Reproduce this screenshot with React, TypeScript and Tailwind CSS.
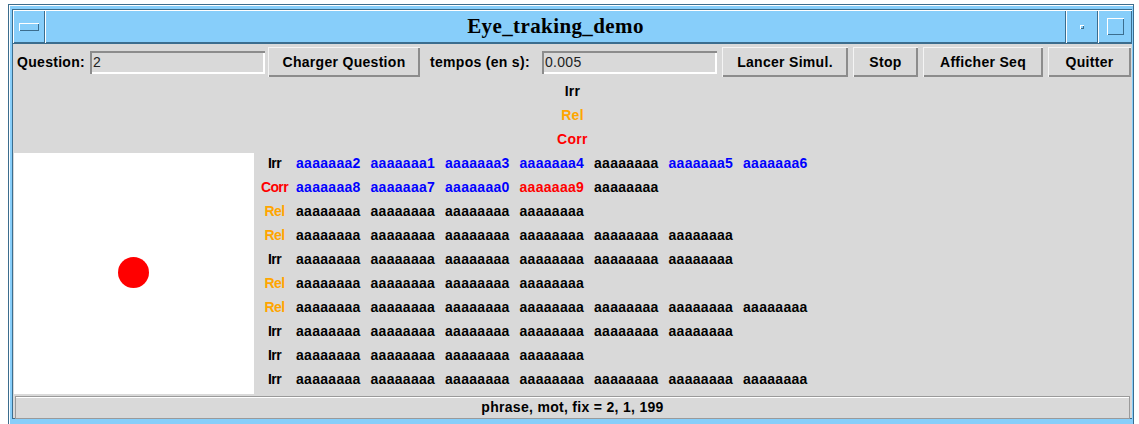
import React from "react";

type Word = { t: string; c?: "b" | "r" | "k" };
type Row = { label: "Irr" | "Rel" | "Corr"; words: Word[] };

const A = "aaaaaaaa";
const plain = (n: number): Word[] => Array.from({ length: n }, () => ({ t: A }));

const rows: Row[] = [
  {
    label: "Irr",
    words: [
      { t: "aaaaaaa2", c: "b" },
      { t: "aaaaaaa1", c: "b" },
      { t: "aaaaaaa3", c: "b" },
      { t: "aaaaaaa4", c: "b" },
      { t: A },
      { t: "aaaaaaa5", c: "b" },
      { t: "aaaaaaa6", c: "b" },
    ],
  },
  {
    label: "Corr",
    words: [
      { t: "aaaaaaa8", c: "b" },
      { t: "aaaaaaa7", c: "b" },
      { t: "aaaaaaa0", c: "b" },
      { t: "aaaaaaa9", c: "r" },
      { t: A },
    ],
  },
  { label: "Rel", words: plain(4) },
  { label: "Rel", words: plain(6) },
  { label: "Irr", words: plain(6) },
  { label: "Rel", words: plain(4) },
  { label: "Rel", words: plain(7) },
  { label: "Irr", words: plain(6) },
  { label: "Irr", words: plain(4) },
  { label: "Irr", words: plain(7) },
];

function labelColor(l: Row["label"]) {
  if (l === "Rel") return "text-[#ffa500]";
  if (l === "Corr") return "text-[#ff0000]";
  return "text-black";
}

function wordColor(c?: Word["c"]) {
  if (c === "b") return "text-[#0000ff]";
  if (c === "r") return "text-[#ff0000]";
  return "text-black";
}

function Button({ w, children }: { w: string; children: React.ReactNode }) {
  return (
    <div
      className={`${w} h-[30px] flex items-center justify-center bg-[#d9d9d9] shadow-[inset_1px_1px_0_#f4f4f4,inset_-2px_-2px_0_#8c8c8c] font-bold`}
    >
      {children}
    </div>
  );
}

function Field({ value }: { value: string }) {
  return (
    <div className="w-[175px] h-[23px] flex items-center pl-[3px] bg-[#d9d9d9] shadow-[inset_2px_2px_0_#8c8c8c,inset_-2px_-2px_0_#ffffff] font-normal text-[#222]">
      {value}
    </div>
  );
}

export default function App() {
  return (
    <div
      className="w-[1139px] h-[424px] bg-white overflow-hidden text-[14px] tracking-[0.3px] text-black"
      style={{ fontFamily: '"Liberation Sans", Arial, sans-serif' }}
    >
      {/* window frame */}
      <div className="ml-[8px] mt-[4px] w-[1126px] h-[430px] bg-[#87cefa] border border-[#3b6d8e] pl-[3px] pt-[4px] pr-[1px] shadow-[inset_1px_1px_0_#ffffff]">
        <div className="border-l border-t border-[#3b6d8e]">
          {/* title bar */}
          <div className="h-[34px] flex border-b border-[#3b6d8e] bg-[#87cefa]">
            <div className="w-[32px] h-[33px] flex items-center justify-center shadow-[inset_1px_1px_0_#ffffff,inset_-1px_-1px_0_#3b6d8e]">
              <div className="w-[20px] h-[8px] bg-[#87cefa] shadow-[inset_1px_1px_0_#ffffff,inset_-1px_-1px_0_#3b6d8e]" />
            </div>
            <div
              className="flex-1 h-[33px] flex items-center justify-center font-bold text-[21px] tracking-[0.4px] shadow-[inset_1px_1px_0_#ffffff,inset_-1px_-1px_0_#3b6d8e]"
              style={{ fontFamily: '"Liberation Serif", "Times New Roman", serif' }}
            >
              Eye_traking_demo
            </div>
            <div className="w-[32px] h-[33px] flex items-center justify-center shadow-[inset_1px_1px_0_#ffffff,inset_-1px_-1px_0_#3b6d8e]">
              <div className="w-[4px] h-[4px] bg-[#87cefa] shadow-[inset_1px_1px_0_#ffffff,inset_-1px_-1px_0_#3b6d8e]" />
            </div>
            <div className="w-[34px] h-[33px] flex items-center justify-center shadow-[inset_1px_1px_0_#ffffff,inset_-1px_-1px_0_#3b6d8e]">
              <div className="w-[17px] h-[17px] bg-[#87cefa] shadow-[inset_1px_1px_0_#ffffff,inset_-1px_-1px_0_#3b6d8e]" />
            </div>
          </div>

          {/* client area */}
          <div className="h-[375px] bg-[#d9d9d9] border-b border-[#3b6d8e] flex flex-col">
            {/* toolbar */}
            <div className="mt-[3px] h-[30px] flex items-center">
              <div className="w-[77px] pl-[4px] font-bold">Question:</div>
              <Field value="2" />
              <div className="ml-[3px]">
                <Button w="w-[152px]">Charger Question</Button>
              </div>
              <div className="w-[122px] pl-[10px] font-bold">tempos (en s):</div>
              <Field value="0.005" />
              <div className="ml-[5px] flex gap-[5px]">
                <Button w="w-[126px]">Lancer Simul.</Button>
                <Button w="w-[65px]">Stop</Button>
                <Button w="w-[120px]">Afficher Seq</Button>
                <Button w="w-[83px]">Quitter</Button>
              </div>
            </div>

            {/* legend */}
            <div className="mt-[2px] flex flex-col items-center font-bold">
              <div className="h-[24px] leading-[24px] text-black">Irr</div>
              <div className="h-[24px] leading-[24px] text-[#ffa500]">Rel</div>
              <div className="h-[24px] leading-[24px] text-[#ff0000]">Corr</div>
            </div>

            {/* canvas + sentences */}
            <div className="flex h-[243px]">
              <div className="ml-[1px] mt-[2px] w-[240px] h-[241px] bg-white flex items-center justify-center">
                <div className="w-[31px] h-[31px] rounded-full bg-[#ff0000] mt-[-2px] ml-[-2px]" />
              </div>
              <div className="flex flex-col font-bold">
                {rows.map((r, i) => (
                  <div key={i} className="h-[24px] flex items-center">
                    <div className={`w-[41px] text-center tracking-[-0.6px] ${labelColor(r.label)}`}>
                      {r.label}
                    </div>
                    <div className="ml-[1px] flex">
                      {r.words.map((w, j) => (
                        <span key={j} className={`inline-block w-[74.5px] ${wordColor(w.c)}`}>
                          {w.t}
                        </span>
                      ))}
                    </div>
                  </div>
                ))}
              </div>
            </div>

            {/* status bar */}
            <div className="mt-[2px] mx-[2px] h-[23px] flex items-center justify-center bg-[#d9d9d9] border border-[#9a9a9a] shadow-[inset_0_1px_0_#ffffff] font-bold">
              phrase, mot, fix = 2, 1, 199
            </div>
          </div>
        </div>
      </div>
    </div>
  );
}
